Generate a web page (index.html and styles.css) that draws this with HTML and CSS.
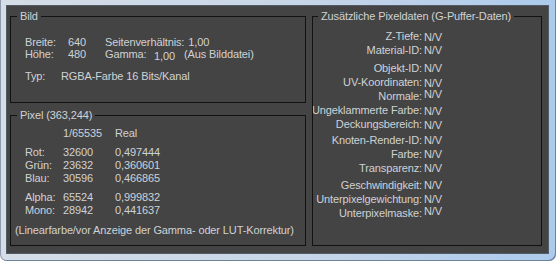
FILE: index.html
```html
<!DOCTYPE html>
<html lang="de">
<head>
<meta charset="utf-8">
<title>Pixeldaten</title>
<link rel="stylesheet" href="styles.css">
</head>
<body>
<div class="frame">
  <div class="panel">
    <div class="col-left">
      <fieldset class="group">
        <legend>Bild</legend>
        <div class="inner bild">
          <div class="row"><span class="k1">Breite:</span><span class="v1">640</span><span>Seitenverhältnis:</span><span class="v2">1,00</span></div>
          <div class="row"><span class="k1">Höhe:</span><span class="v1">480</span><span class="kg">Gamma:</span><span class="vg">1,00</span><span>(Aus Bilddatei)</span></div>
          <div class="row typ"><span class="kt">Typ:</span><span>RGBA-Farbe 16 Bits/Kanal</span></div>
        </div>
      </fieldset>
      <fieldset class="group">
        <legend>Pixel (363,244)</legend>
        <div class="inner pixel">
          <div class="prow head"><span class="pk"></span><span class="pv">1/65535</span><span>Real</span></div>
          <div class="pblock">
            <div class="prow"><span class="pk">Rot:</span><span class="pv">32600</span><span>0,497444</span></div>
            <div class="prow"><span class="pk">Grün:</span><span class="pv">23632</span><span>0,360601</span></div>
            <div class="prow"><span class="pk">Blau:</span><span class="pv">30596</span><span>0,466865</span></div>
          </div>
          <div class="pblock">
            <div class="prow"><span class="pk">Alpha:</span><span class="pv">65524</span><span>0,999832</span></div>
            <div class="prow"><span class="pk">Mono:</span><span class="pv">28942</span><span>0,441637</span></div>
          </div>
          <div class="note">(Linearfarbe/vor Anzeige der Gamma- oder LUT-Korrektur)</div>
        </div>
      </fieldset>
    </div>
    <fieldset class="group extra">
      <legend>Zusätzliche Pixeldaten (G-Puffer-Daten)</legend>
      <div class="inner gbuf">
        <div class="gblock">
          <div class="grow"><span class="gk">Z-Tiefe:</span><span class="gv lo">N/V</span></div>
          <div class="grow"><span class="gk">Material-ID:</span><span class="gv">N/V</span></div>
        </div>
        <div class="gblock b2">
          <div class="grow"><span class="gk">Objekt-ID:</span><span class="gv">N/V</span></div>
          <div class="grow"><span class="gk">UV-Koordinaten:</span><span class="gv lo">N/V</span></div>
          <div class="grow"><span class="gk">Normale:</span><span class="gv hi">N/V</span></div>
          <div class="grow"><span class="gk">Ungeklammerte Farbe:</span><span class="gv lo">N/V</span></div>
          <div class="grow"><span class="gk">Deckungsbereich:</span><span class="gv lo">N/V</span></div>
        </div>
        <div class="gblock b3">
          <div class="grow"><span class="gk">Knoten-Render-ID:</span><span class="gv">N/V</span></div>
          <div class="grow"><span class="gk">Farbe:</span><span class="gv">N/V</span></div>
          <div class="grow"><span class="gk">Transparenz:</span><span class="gv">N/V</span></div>
        </div>
        <div class="gblock b4">
          <div class="grow"><span class="gk">Geschwindigkeit:</span><span class="gv">N/V</span></div>
          <div class="grow"><span class="gk">Unterpixelgewichtung:</span><span class="gv">N/V</span></div>
          <div class="grow"><span class="gk">Unterpixelmaske:</span><span class="gv hi">N/V</span></div>
        </div>
      </div>
    </fieldset>
  </div>
</div>
</body>
</html>
```

FILE: styles.css
```css
html, body {
  margin: 0;
  padding: 0;
  background: #ffffff;
}

body {
  font-family: "Liberation Sans", Arial, sans-serif;
  font-size: 11px;
  letter-spacing: -0.12px;
  color: #cfd2d5;
}

.frame {
  width: 556px;
  height: 261px;
  box-sizing: border-box;
  padding: 5px 7px 7px 6px;
  background: linear-gradient(to right, #d5dde6 0%, #c7d6e8 55%, #accaec 100%);
  border-radius: 0 0 7px 7px;
  box-shadow: inset -1px -1px 0 #6d839c, inset 1px 0 0 #8d9bac;
}

.panel {
  height: 100%;
  box-sizing: border-box;
  background: #444444;
  border: 1px solid #535b66;
  padding: 4px 6px 7px 3px;
  display: grid;
  grid-template-columns: 296px 230px;
  column-gap: 6px;
}

.col-left {
  display: grid;
  grid-template-rows: 93px 1fr;
  row-gap: 6px;
}

.group {
  margin: 0;
  padding: 0;
  min-width: 0;
  border: 1px solid #121212;
}

.group legend {
  margin-left: 6px;
  padding: 0 3px;
  line-height: 13px;
}

.extra legend {
  margin-left: 5px;
}

/* Bild */
.bild {
  padding: 13px 0 0 14px;
}

.row {
  display: flex;
  line-height: 12px;
  white-space: nowrap;
}

.k1 { width: 43px; }
.v1 { width: 37px; }
.v2 { margin-left: 4px; }
.kg { width: 49px; }
.vg { width: 30px; margin-top: 2px; }
.typ { margin-top: 8px; }
.kt { width: 36px; }

/* Pixel */
.pixel {
  padding: 5px 0 0 4px;
}

.prow {
  display: flex;
  line-height: 13px;
  padding-left: 10px;
  white-space: nowrap;
}

.pk { width: 38px; }
.pv { width: 52px; }

.head { margin-bottom: 6px; }
.pblock + .pblock { margin-top: 6px; }

.note {
  margin-top: 7px;
  line-height: 13px;
  white-space: nowrap;
}

/* G-Puffer */
.gbuf {
  padding-top: 6px;
}

.grow {
  display: flex;
  align-items: flex-start;
  line-height: 14px;
  height: 14px;
}

.gk {
  width: 109px;
  flex: none;
  display: flex;
  justify-content: flex-end;
  overflow: hidden;
  white-space: nowrap;
}

.gv {
  margin-left: 2px;
}

.gv.lo { margin-top: 1px; }
.gv.hi { margin-top: -2px; }

.b2 { margin-top: 4px; }
.b3 { margin-top: 2px; }
.b4 { margin-top: 3px; }
```
